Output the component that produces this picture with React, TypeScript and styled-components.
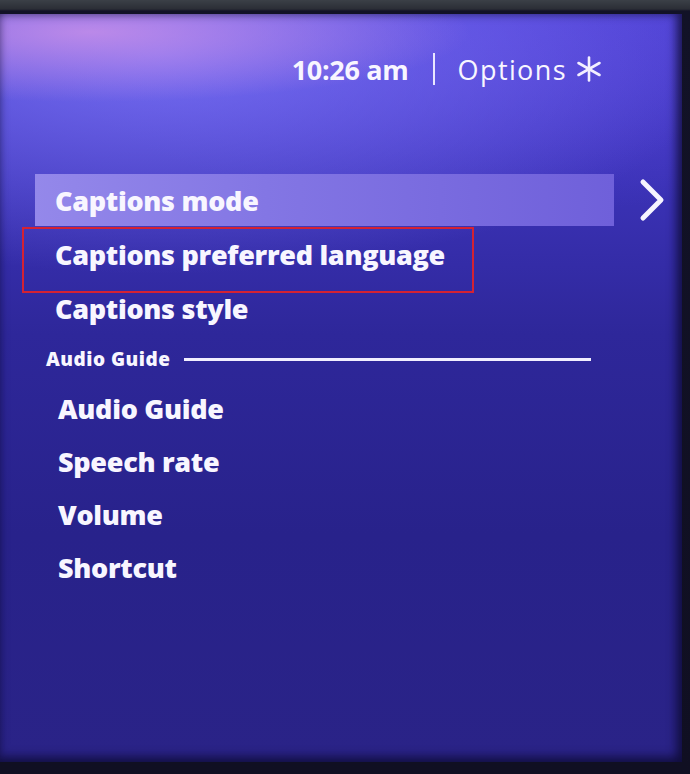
import React from "react";
import styled, { createGlobalStyle } from "styled-components";

const GlobalStyle = createGlobalStyle`
  html, body {
    margin: 0;
    padding: 0;
    background: #15141f;
  }
  * {
    box-sizing: border-box;
  }
`;

type Item = { label: string; selected?: boolean; marked?: boolean };

const captionItems: Item[] = [
  { label: "Captions mode", selected: true },
  { label: "Captions preferred language", marked: true },
  { label: "Captions style" },
];

const audioItems: Item[] = [
  { label: "Audio Guide" },
  { label: "Speech rate" },
  { label: "Volume" },
  { label: "Shortcut" },
];

const StarIcon = () => (
  <svg width="26" height="26" viewBox="0 0 26 26" fill="none">
    <g stroke="#f2efff" strokeWidth="2.6" strokeLinecap="round">
      <line x1="13" y1="1.5" x2="13" y2="24.5" />
      <line x1="2.5" y1="7" x2="23.5" y2="19" />
      <line x1="2.5" y1="19" x2="23.5" y2="7" />
    </g>
  </svg>
);

const Chevron = () => (
  <svg width="28" height="44" viewBox="0 0 28 44" fill="none">
    <polyline
      points="5,4 23,22 5,40"
      stroke="#f6f4ff"
      strokeWidth="5"
      strokeLinecap="round"
      strokeLinejoin="round"
    />
  </svg>
);

export default function App() {
  return (
    <>
      <GlobalStyle />
      <Bezel>
        <Screen>
          <Header>
            <Clock>10:26 am</Clock>
            <Divider />
            <Options>Options</Options>
            <StarIcon />
          </Header>
          <Menu>
            {captionItems.map((item) => (
              <Row key={item.label}>
                <Bar $selected={item.selected}>
                  <Label>{item.label}</Label>
                  {item.marked && <Marker />}
                </Bar>
                {item.selected && (
                  <Arrow>
                    <Chevron />
                  </Arrow>
                )}
              </Row>
            ))}
            <Section>
              <SectionTitle>Audio Guide</SectionTitle>
              <Rule />
            </Section>
            {audioItems.map((item) => (
              <SubRow key={item.label}>
                <Label>{item.label}</Label>
              </SubRow>
            ))}
          </Menu>
        </Screen>
      </Bezel>
    </>
  );
}

const Bezel = styled.div`
  width: 690px;
  height: 774px;
  padding: 14px 8px 12px 0;
  background: linear-gradient(
    180deg,
    #3b4047 0px,
    #2b2e36 9px,
    #121227 11px,
    #100f22 100%
  );
  display: flex;
`;

const Screen = styled.main`
  flex: 1;
  display: flex;
  flex-direction: column;
  overflow: hidden;
  font-family: "Open Sans", "DejaVu Sans", sans-serif;
  color: #f8f6ff;
  background:
    radial-gradient(ellipse 380px 70px at 90px 18px, rgba(206, 146, 232, 0.8), rgba(206, 146, 232, 0) 100%),
    radial-gradient(ellipse 560px 220px at 160px 40px, rgba(124, 116, 248, 0.85), rgba(124, 116, 248, 0) 100%),
    radial-gradient(ellipse 460px 180px at 500px 20px, rgba(88, 70, 220, 0.7), rgba(88, 70, 220, 0) 100%),
    linear-gradient(180deg, #4a40d0 0px, #3b32b6 170px, #2e279a 320px, #28228b 520px, #2a2387 100%);
  box-shadow: inset -6px 0 10px rgba(10, 8, 40, 0.6), inset 0 -6px 10px rgba(10, 8, 40, 0.5);
`;

const Header = styled.header`
  display: flex;
  align-items: center;
  justify-content: flex-end;
  height: 50px;
  margin-top: 30px;
  padding-right: 80px;
  svg {
    margin-left: 9px;
  }
`;

const Clock = styled.span`
  font-size: 27px;
  font-weight: 700;
  letter-spacing: -0.3px;
`;

const Divider = styled.span`
  width: 2px;
  height: 32px;
  margin: 0 23px 0 24px;
  background: #e9e6ff;
`;

const Options = styled.span`
  font-size: 27px;
  font-weight: 400;
  letter-spacing: 1.4px;
`;

const Menu = styled.nav`
  display: flex;
  flex-direction: column;
  margin-top: 79px;
`;

const Row = styled.div`
  display: flex;
  align-items: center;
  height: 54px;
`;

const Bar = styled.div<{ $selected?: boolean }>`
  position: relative;
  display: flex;
  align-items: center;
  width: 579px;
  height: 52px;
  margin-left: 35px;
  padding-left: 20px;
  background: ${(p) =>
    p.$selected
      ? "linear-gradient(90deg, #9488ea 0%, #8376e4 40%, #6f60da 100%)"
      : "transparent"};
`;

const Label = styled.span`
  font-size: 27px;
  font-weight: 800;
  letter-spacing: -0.3px;
  white-space: nowrap;
`;

const Marker = styled.span`
  position: absolute;
  left: -13px;
  top: -1px;
  width: 452px;
  height: 66px;
  border: 2px solid #d42233;
  pointer-events: none;
`;

const Arrow = styled.span`
  display: flex;
  margin-left: 24px;
`;

const Section = styled.div`
  display: flex;
  align-items: center;
  gap: 14px;
  height: 36px;
  margin: 6px 0 5px 46px;
`;

const SectionTitle = styled.span`
  font-size: 19px;
  font-weight: 800;
  letter-spacing: 0.5px;
`;

const Rule = styled.span`
  width: 407px;
  height: 3px;
  background: #f1eeff;
`;

const SubRow = styled.div`
  display: flex;
  align-items: center;
  height: 53px;
  padding-left: 58px;
`;
